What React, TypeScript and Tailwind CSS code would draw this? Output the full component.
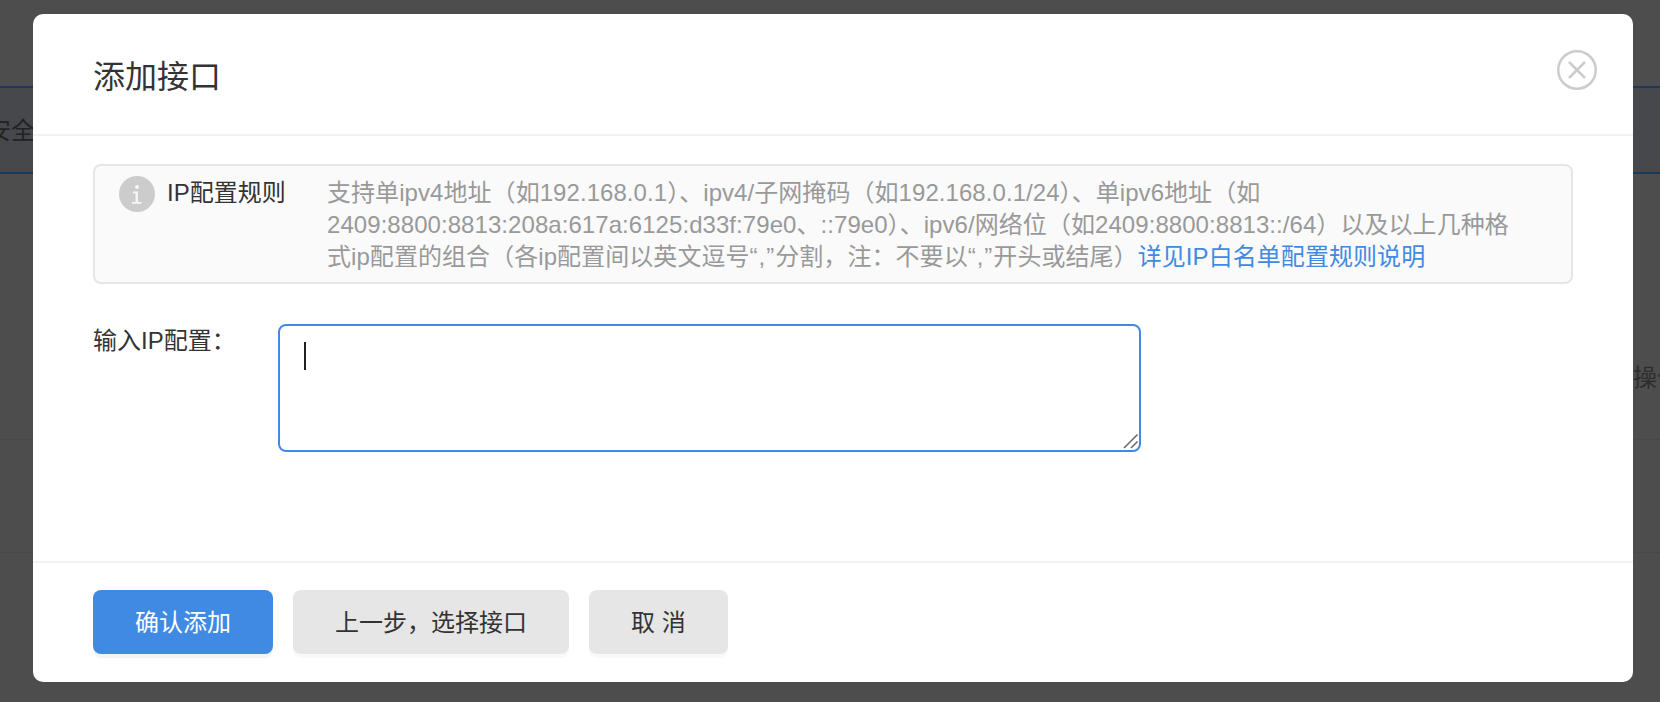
import React from 'react';

const font = 'font-["Helvetica_Neue","Liberation_Sans","Noto_Sans_CJK_SC",sans-serif]';

const App: React.FC = () => {
  return (
    <div className={`relative h-[702px] w-[1660px] overflow-hidden bg-[#4d4d4d] ${font}`}>
      {/* Page behind the overlay */}
      <div className="flex h-full flex-col pt-[86px]">
        <div className="flex h-[88px] items-center overflow-hidden border-y-2 border-[#1a3a5c] bg-[#46484c] pt-[2px] text-[24px] text-[#222]">
          <span className="-ml-[13px]">安全</span>
        </div>
        <div className="flex h-[266px] items-start justify-end overflow-hidden border-b border-[#484848] pt-[192px] text-[24px] leading-none text-[#2d2d2d]">
          <span className="-mr-[21px] shrink-0">操作</span>
        </div>
        <div className="h-[113px] border-b border-[#484848]" />
      </div>

      {/* Modal */}
      <div className="absolute left-[33px] top-[14px] flex h-[668px] w-[1600px] flex-col rounded-[10px] bg-white text-[#333]">
        <div className="relative flex h-[122px] shrink-0 items-center border-b-2 border-[#f2f2f2] pl-[60px] pt-[6px]">
          <h2 className="text-[32px] leading-none font-normal">添加接口</h2>
          <svg className="absolute left-[1523px] top-[35px] h-[42px] w-[42px]" viewBox="0 0 42 42" fill="none" stroke="#cccccc">
            <circle cx="21" cy="21" r="18.75" strokeWidth="2.5" />
            <path d="M13 13l16 16M29 13l-16 16" strokeWidth="2.5" />
          </svg>
        </div>

        <div className="flex flex-1 flex-col pl-[60px] pr-[60px] pt-[28px]">
          <div className="flex h-[120px] rounded-[8px] border-2 border-[#e6e6e6] bg-[#fafafa] pl-[24px] pt-[11px] text-[24px] leading-[32px]">
            <svg className="-mt-[1px] h-[36px] w-[36px] shrink-0" viewBox="0 0 36 36">
              <circle cx="18" cy="18" r="18" fill="#cccccc" />
              <circle cx="18" cy="11" r="2" fill="#f5f5f5" />
              <path d="M14 15.5h5v10.5h3.5v1.8h-9.5V26h3.5v-8.7H14z" fill="#f5f5f5" />
            </svg>
            <span className="ml-[12px] w-[160px] shrink-0">IP配置规则</span>
            <p className="whitespace-nowrap tracking-[0.06px] text-[#999]">
              支持单ipv4地址（如192.168.0.1）、ipv4/子网掩码（如192.168.0.1/24）、单ipv6地址（如
              <br />
              2409:8800:8813:208a:617a:6125:d33f:79e0、::79e0）、ipv6/网络位（如2409:8800:8813::/64）以及以上几种格
              <br />
              式ip配置的组合（各ip配置间以英文逗号<span className="tracking-[1px]">“,”</span>分割，注：不要以<span className="tracking-[1px]">“,”</span>开头或结尾）
              <a className="text-[#418ae3]">详见IP白名单配置规则说明</a>
            </p>
          </div>

          <div className="mt-[40px] flex items-start">
            <label className="w-[185px] shrink-0 pt-[1px] text-[24px] leading-[32px]">输入IP配置：</label>
            <div className="relative">
              <textarea
                className="block h-[128px] w-[863px] resize-none rounded-[8px] border-2 border-[#418ae3] bg-white outline-none"
                readOnly
              />
              <span className="absolute left-[26px] top-[18px] h-[28px] w-[2px] bg-[#222]" />
              {/* resize handle */}
              <svg className="absolute bottom-[3px] right-[2px] h-[16px] w-[16px]" viewBox="0 0 16 16" fill="none" stroke="#666666" strokeWidth="1.5">
                <path d="M1 15L14.5 1.5M8 15l6.5-6.5" />
              </svg>
            </div>
          </div>
        </div>

        <div className="flex h-[121px] shrink-0 gap-[20px] border-t-2 border-[#f2f2f2] pl-[60px] pt-[27px] text-[24px]">
          <button className="h-[64px] rounded-[8px] bg-[#418ae3] px-[42px] pt-[2px] text-white shadow-[0_4px_0_#f2f4f6]">确认添加</button>
          <button className="h-[64px] rounded-[8px] bg-[#e6e6e6] px-[42px] pt-[2px] text-[#333] shadow-[0_4px_0_#f9f9f9]">上一步，选择接口</button>
          <button className="h-[64px] rounded-[8px] bg-[#e6e6e6] px-[42px] pt-[2px] text-[#333] shadow-[0_4px_0_#f9f9f9]">取 消</button>
        </div>
      </div>
    </div>
  );
};

export default App;
